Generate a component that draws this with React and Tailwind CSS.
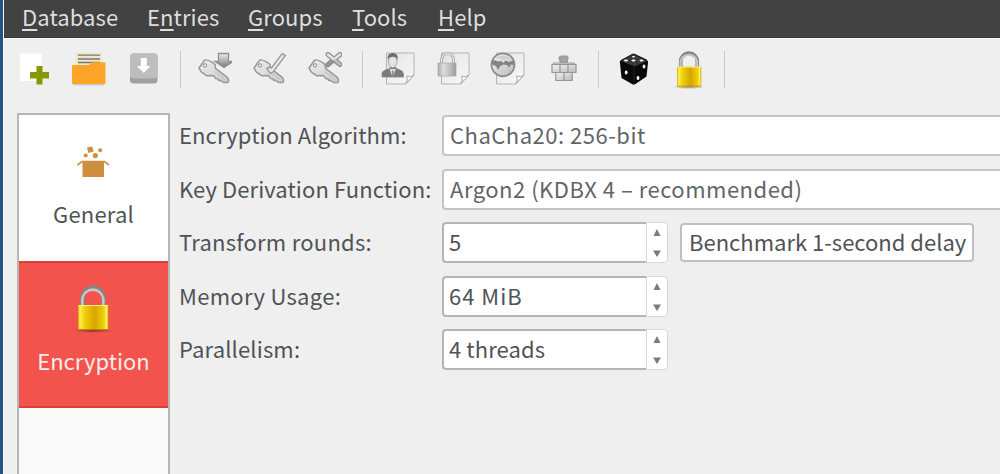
import React from "react";

const menus = [
  { pre: "", key: "D", post: "atabase", box: "w-[125px]" },
  { pre: "E", key: "n", post: "tries", box: "w-[101px]" },
  { pre: "", key: "G", post: "roups", box: "w-[104px]" },
  { pre: "", key: "T", post: "ools", box: "w-[86px]" },
  { pre: "", key: "H", post: "elp", box: "w-[60px]" },
];

function MenuBar() {
  return (
    <nav className="flex h-[38px] shrink-0 border-b border-[#383838] bg-[#424242] pl-[18px] text-[#dedede]">
      {menus.map((m) => (
        <div key={m.key} className={`${m.box} h-9 shrink-0 tracking-[0.1px] leading-[33px]`}>
          {m.pre}
          <span className="underline decoration-[1.5px] underline-offset-[3px]">{m.key}</span>
          {m.post}
        </div>
      ))}
    </nav>
  );
}

function Icon({ children, w = 36, className = "" }) {
  return (
    <svg width={w} height="36" viewBox={`0 0 ${w} 36`} className={`shrink-0 ${className}`}>
      {children}
    </svg>
  );
}

function Defs() {
  return (
    <svg width="0" height="0" className="absolute">
      <defs>
        <linearGradient id="gold" x1="0" x2="1" y1="0" y2="0">
          <stop offset="0" stopColor="#c79a00" />
          <stop offset=".06" stopColor="#fff04d" />
          <stop offset=".22" stopColor="#f0d008" />
          <stop offset=".55" stopColor="#d8a300" />
          <stop offset=".85" stopColor="#efd009" />
          <stop offset=".94" stopColor="#fff36b" />
          <stop offset="1" stopColor="#c99b00" />
        </linearGradient>
        <linearGradient id="steel" x1="0" x2="1" y1="0" y2="1">
          <stop offset="0" stopColor="#f4f4f4" />
          <stop offset="1" stopColor="#b9b9b9" />
        </linearGradient>
        <linearGradient id="key" x1="0" x2="1" y1="0" y2="1">
          <stop offset="0" stopColor="#ececec" />
          <stop offset="1" stopColor="#cccccc" />
        </linearGradient>
        <linearGradient id="paper" x1="0" x2="1" y1="0" y2="1">
          <stop offset="0" stopColor="#e2e2e2" />
          <stop offset="1" stopColor="#fafafa" />
        </linearGradient>
        <linearGradient id="dark" x1="0" x2="0" y1="0" y2="1">
          <stop offset="0" stopColor="#eeeeee" />
          <stop offset="1" stopColor="#777" />
        </linearGradient>
        <linearGradient id="silver" x1="0" x2="1">
          <stop offset="0" stopColor="#aaa" />
          <stop offset=".3" stopColor="#dedede" />
          <stop offset=".7" stopColor="#bbb" />
          <stop offset="1" stopColor="#999" />
        </linearGradient>
        <radialGradient id="shade">
          <stop offset="0" stopColor="#000" stopOpacity=".4" />
          <stop offset="1" stopColor="#000" stopOpacity="0" />
        </radialGradient>
      </defs>
    </svg>
  );
}

function KeyShape() {
  return (
    <g>
      <path
        d="M3 17 L8.5 9.2 Q11 8 16.3 11.3 L19 13.5 L19.5 17.4 L31.3 26.4 Q33.300 28.600 32 31.500 L27.500 31.500 L24.500 29.300 L22.800 29.500 L21.800 27.800 L19.600 27.600 L18.500 25.500 L16.500 24.500 L10.500 24.700 L5.200 20.800 Z"
        fill="url(#key)"
        stroke="#999"
        strokeWidth="1.500"
        strokeLinejoin="round"
      />
      <path d="M18.500 20.500 L29.500 29" stroke="#bdbdbd" />
      <circle cx="8.9" cy="14.4" r="1.7" fill="#eee" stroke="#888" />
    </g>
  );
}

function Page() {
  return (
    <g stroke="#b4b4b4" strokeLinejoin="round">
      <path d="M8.5 1 H36 V23 L27.5 32 H8.5 Z" fill="url(#paper)" />
      <path d="M36 23 L27.5 32 Q30.5 28 28.6 24 Q33 25.8 36 23" fill="#fff" stroke="#aaa" />
    </g>
  );
}

function Padlock({ className, width, height }) {
  return (
    <svg width={width} height={height} viewBox="0 0 40 48" className={className}>
      <ellipse cx="20" cy="45.500" rx="20" ry="2.500" fill="url(#shade)" />
      <path d="M9.500 23 V13.500 a10.500 11 0 0 1 21 0 V23" fill="none" stroke="#858585" strokeWidth="4.600" />
      <path d="M9.300 23 V13.500 a10.700 11 0 0 1 21 0 V23" fill="none" stroke="#c6c6c6" strokeWidth="2.600" />
      <rect x="5" y="20" width="30.500" height="25" rx=".8" fill="url(#gold)" />
      <path d="M5.500 20.500 H35" stroke="#fff27a" />
      <path d="M5.500 44.500 H35" stroke="#b68a00" />
    </svg>
  );
}

const Separator = ({ className }) => <span className={`h-[37px] w-px shrink-0 bg-[#c9c9c9] ${className}`} />;

function Toolbar() {
  return (
    <div className="flex h-[75px] shrink-0 border-t border-[#f7f7f7] pt-[12px] pl-[12px]">
      <Icon>
        <path d="M4 2.500 h21.500 v27.500 h-21.500z" fill="#fff" />
        <path d="M20.500 15 h6 v6 h6.500 v6.500 h-6.500 v6 h-6 v-6 h-6.500 v-6.500 h6.500z" fill="#859900" />
      </Icon>
      <Icon className="ml-[18px]">
        <path d="M5 1.500 h27 v17 h-27z" fill="#eee8ce" />
        <path d="M8 4.200 h22 M8 8 h22 M8 11.500 h22" stroke="#77786a" strokeWidth="1.300" />
        <path d="M3 33.500 h31" stroke="#ccc" strokeWidth="2" />
        <path d="M2 15 q0-1 1-1 h16 l3-2.800 h12.500 q1 0 1 1 v20.800 h-33.500z" fill="#fea529" />
      </Icon>
      <Icon className="ml-[18px]">
        <rect x="6" y="2.500" width="27.500" height="30" rx="3.500" fill="#9f9f9f" />
        <rect x="6" y="2.500" width="27.500" height="25" rx="3.500" fill="#bdbdbd" />
        <path d="M16.800 7 h6 v8 h3.800 l-6.800 7 l-6.800-7 h3.800z" fill="#fff" />
      </Icon>
      <Separator className="ml-[20px]" />
      <Icon className="ml-[15px]">
        <KeyShape />
        <path d="M22.500 2.500 h10 v8 h4.500 l-9 6 l-9-6 h3.500z" fill="url(#dark)" stroke="#909090" strokeWidth="1.300" />
      </Icon>
      <Icon className="ml-[19px]">
        <KeyShape />
        <path d="M31.200 2.600 L34.500 4.500 L22.500 20.500 L19.500 22.500 L15.600 17.500 L18 16.300 L20.500 17z" fill="#e8e8e8" stroke="#999" strokeWidth="1.300" />
      </Icon>
      <Icon className="ml-[19px]">
        <KeyShape />
        <path d="M22 3.500 L34 13.500 M34 3.500 L21.500 14" stroke="#929292" strokeWidth="5" strokeLinecap="round" />
        <path d="M22 3.500 L27.500 8 M34 3.500 L28.500 8" stroke="#e5e5e5" strokeWidth="2.500" strokeLinecap="round" />
        <path d="M29 9 L34 13.500" stroke="#c4c4c4" strokeWidth="2.300" strokeLinecap="round" />
      </Icon>
      <Separator className="ml-[20px]" />
      <Icon w={40} className="ml-[15px]">
        <g transform="translate(0 1)">
          <Page />
          <path d="M4 25 V21.500 Q4 18.500 10.500 17 L15 13.500 L19.500 17 Q25.500 18.700 25.500 22 V25z" fill="#7b7b7b" stroke="#858585" strokeWidth=".8" />
          <path d="M11.500 17 L14.500 25 L18 17z" fill="#ddd" />
          <path d="M14.800 18.500 v6" stroke="#888" strokeWidth="1.500" />
          <ellipse cx="14.700" cy="9.200" rx="4.300" ry="6.500" fill="#e2e2e2" stroke="#999" strokeWidth=".8" />
          <path d="M10 8 Q8.500 1.300 14.700 1 Q21 1.300 19.400 8 Q17.700 3.700 12.500 5.200 Q10.500 5.500 10 8" fill="#6d6d6d" />
        </g>
      </Icon>
      <Icon w={40} className="ml-[15px]">
        <g transform="translate(0 1)">
          <Page />
          <path d="M8.500 12 V8 a6 6.500 0 0 1 12 0 V12" fill="none" stroke="#a8a8a8" strokeWidth="3" />
          <path d="M8.500 12 V8 a6 6.500 0 0 1 12 0 V12" fill="none" stroke="#e5e5e5" strokeWidth="1.300" />
          <rect x="5" y="11" width="18" height="13" fill="url(#silver)" stroke="#aaa" strokeWidth=".7" />
        </g>
      </Icon>
      <Icon w={40} className="ml-[15px]">
        <g transform="translate(0 1)">
          <Page />
          <circle cx="15" cy="12.800" r="11.500" fill="url(#steel)" stroke="#8a8a8a" strokeWidth="1.700" />
          <path d="M4 9 Q6 7.500 10 9.500 L13 9 L15.500 11 L17.500 8.500 L21 10 L26 8.500 V13 L23 12.500 L21 15.500 L19 13 L15 12.500 L12 14.500 L10 18 L8 14 L4 12.500z" fill="#838383" />
          <path d="M7 6 Q14 1 22 6 L16 7.500z" fill="#cfcfcf" />
        </g>
      </Icon>
      <Icon className="ml-[17px]">
        <g fill="url(#steel)" stroke="#979797" strokeWidth="1.200" strokeLinejoin="round">
          <path d="M14 6.500 L16 5 H21.500 L23 6.500 L22 12 H15.500z" fill="#a2a2a2" />
          <path d="M9 12 h20 l2 2.500 h-24z" />
          <path d="M7 13.500 h8 v8 h-8z M15 13.500 h8 v8 h-8z M23 13.500 h8 v8 h-8z" />
          <path d="M10.800 21.500 h8.200 v8 h-8.200z M19 21.500 h8.200 v8 h-8.200z" />
        </g>
      </Icon>
      <Separator className="ml-[17px]" />
      <Icon className="ml-[17px]">
        <g transform="translate(-1 1)">
          <path d="M5 11 Q4 9.500 6 8 L17 2 Q18.500 1 20 2 L31.500 7.500 Q33.500 9 33 11 L31.500 24.500 L20.500 32 Q18.500 33 17 32 L6.500 26z" fill="#090909" />
          <path d="M6 9 L18.500 2 L32 9 L19.500 14.500z" fill="#383838" />
          <path d="M19 15 V31" stroke="#222" />
          <g fill="#fff">
            <ellipse cx="11" cy="8.500" rx="2" ry="1" /><ellipse cx="18.500" cy="8.500" rx="2" ry="1" /><ellipse cx="26.500" cy="8.500" rx="2" ry="1" /><ellipse cx="18.500" cy="4.800" rx="1.600" ry=".8" />
            <ellipse cx="11.200" cy="20.500" rx="1.400" ry="2" /><ellipse cx="29" cy="14.500" rx="1.400" ry="2" /><ellipse cx="23" cy="26" rx="1.400" ry="2" />
          </g>
        </g>
      </Icon>
      <Padlock width="34" height="38" className="ml-[20px] shrink-0" />
      <Separator className="ml-[18px]" />
    </div>
  );
}

function BoxIcon() {
  return (
    <svg width="34" height="34" viewBox="0 0 34 34" className="-ml-[2px]">
      <g fill="#ce903e">
        <path d="M6.500 17 h21.500 v15 h-21.500z" />
        <path d="M11 2.500 l5-1 l1.800 5 l-5.500 1.500z" />
        <circle cx="24.200" cy="5.300" r="2" /><circle cx="9.700" cy="10.500" r="2.100" /><circle cx="19.300" cy="10.600" r="2.600" />
      </g>
      <path d="M1.500 20 L6 16.500 H28.500 L33 20" fill="none" stroke="#ce903e" strokeWidth="1.700" />
    </svg>
  );
}

function Sidebar() {
  return (
    <aside className="flex w-[153px] shrink-0 flex-col border-2 border-b-0 border-[#b6b6b6] bg-[#f9f9f9] text-center">
      <div className="flex h-[146px] shrink-0 flex-col items-center bg-white pt-[30px] text-[#505356]">
        <BoxIcon />
        <div className="mt-[17px] leading-[34px] tracking-[0.2px]">General</div>
      </div>
      <div className="flex h-[147px] shrink-0 flex-col items-center border-y-2 border-[#e33c35] bg-[#f2544d] pt-[22px] text-[#fbecec]">
        <Padlock width="40" height="48" className="-ml-[2px]" />
        <div className="mt-[10px] leading-[34px]">Encryption</div>
      </div>
    </aside>
  );
}

function Spin({ value, className = "" }) {
  return (
    <div className="flex h-[41px] w-[226px] shrink-0">
      <div className={`w-[204px] rounded-l-[4px] border-2 border-r-0 border-[#b5b5b5] bg-white pl-[5px] leading-[34px] ${className}`}>{value}</div>
      <div className="flex w-[22px] flex-col items-center justify-between rounded-r-[4px] border border-[#d6d6d6] bg-white pt-[6px] pb-[5px]">
        <svg width="8" height="7" viewBox="0 0 8 7"><path d="M4 0 L7.500 7 H.5z" fill="#7b7b7b" /></svg>
        <svg width="8" height="7" viewBox="0 0 8 7"><path d="M4 7 L8 .5 H0z" fill="#7b7b7b" /></svg>
      </div>
    </div>
  );
}

const Select = ({ children }) => (
  <div className="h-[41px] w-[600px] shrink-0 rounded-[4px] border-2 border-[#c4c4c4] bg-white pl-[6px] leading-[34px] tracking-[0.5px] text-[#626568]">{children}</div>
);

function Row({ label, className = "", children }) {
  return (
    <div className="flex h-[41px] shrink-0 items-start">
      <div className={`w-[263px] shrink-0 whitespace-nowrap leading-[38px] ${className}`}>{label}</div>
      {children}
    </div>
  );
}

export default function App() {
  return (
    <div className="flex h-[474px] w-[1000px] overflow-hidden bg-[#efefef] font-['Noto_Sans_CJK_SC','Noto_Sans',sans-serif] text-[22px] text-[#505356]">
      <Defs />
      <div className="w-[3px] shrink-0 bg-[#20567f]" />
      <div className="flex min-w-0 flex-1 flex-col border-l border-[#f6f6f6]">
        <MenuBar />
        <Toolbar />
        <main className="flex min-h-0 flex-1 pl-[13px]">
          <Sidebar />
          <section className="ml-[9px] flex shrink-0 flex-col gap-[12.5px] pt-[2px]">
            <Row label="Encryption Algorithm:" className="tracking-[0.12px]"><Select>ChaCha20: 256-bit</Select></Row>
            <Row label="Key Derivation Function:" className="tracking-[0.08px]"><Select>Argon2 (KDBX 4 – recommended)</Select></Row>
            <Row label="Transform rounds:" className="tracking-[0.25px]">
              <Spin value="5" />
              <div className="ml-[12px] mt-px h-[39px] w-[294px] shrink-0 whitespace-nowrap rounded-[4px] border-2 border-[#c0c0c0] bg-white pl-[7px] leading-[32px]">Benchmark 1-second delay</div>
            </Row>
            <Row label="Memory Usage:" className="tracking-[0.3px]"><Spin value="64 MiB" className="tracking-[1px]" /></Row>
            <Row label="Parallelism:" className="tracking-[0.15px]"><Spin value="4 threads" className="tracking-[0.1px]" /></Row>
          </section>
        </main>
      </div>
    </div>
  );
}
